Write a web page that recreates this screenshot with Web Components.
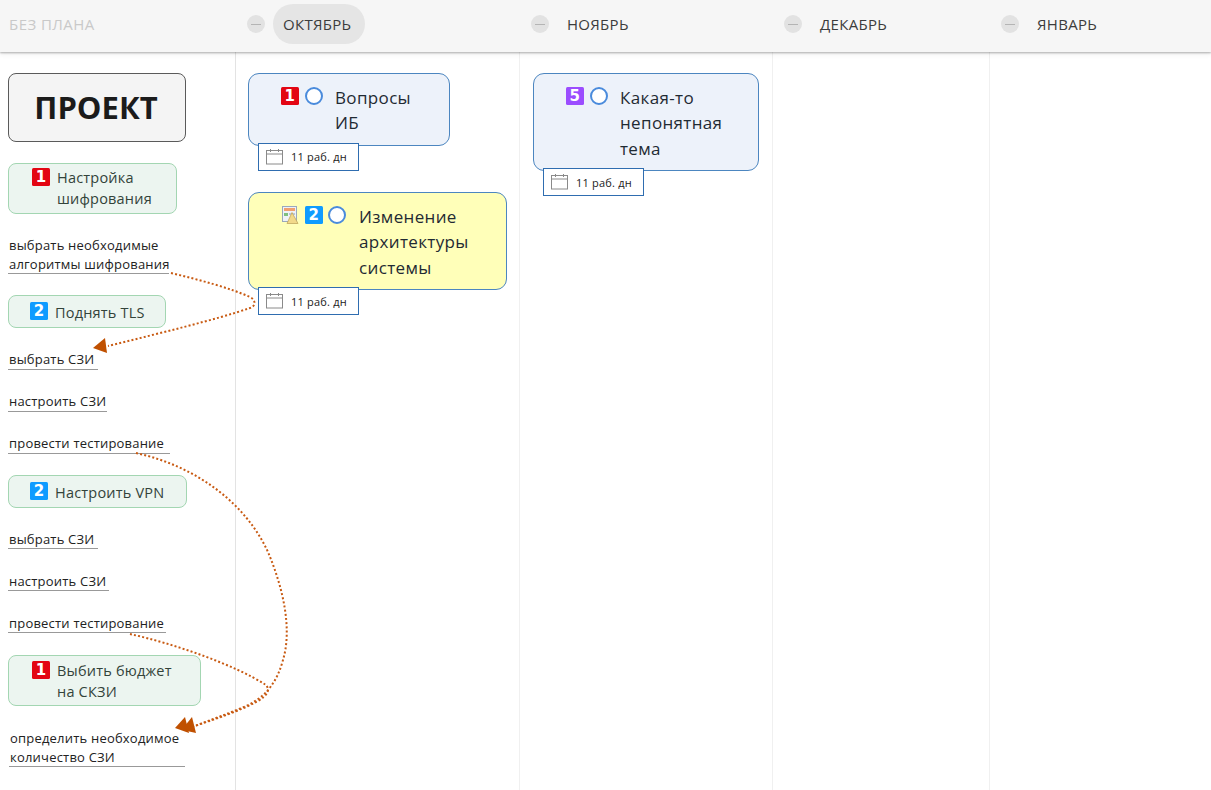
<!DOCTYPE html>
<html lang="ru"><head><meta charset="utf-8"><title>План</title>
<style>
html,body{margin:0;padding:0;height:100%;background:#fff;overflow:hidden}
body{font-family:"Open Sans","Noto Sans",sans-serif}
</style></head><body>
<x-board>
  <x-month slot="head" style="width:236px" muted label="БЕЗ ПЛАНА" nominus></x-month>
  <x-month slot="head" style="width:284px" active label="ОКТЯБРЬ"></x-month>
  <x-month slot="head" style="width:253px" label="НОЯБРЬ"></x-month>
  <x-month slot="head" style="width:217px" label="ДЕКАБРЬ"></x-month>
  <x-month slot="head" style="width:221px" label="ЯНВАРЬ"></x-month>

  <x-column style="width:236px;padding:21px 0 0 8px" strong>
    <x-project>ПРОЕКТ</x-project>
    <x-task style="width:169px;margin-top:21px;--pl:23px;--pt:4px;height:51px" n="1" c="r">Настройка<br>шифрования</x-task>
    <x-note style="width:161px;margin-top:22px">выбрать необходимые<br>алгоритмы шифрования</x-note>
    <x-task style="width:158px;margin-top:21px;--pl:21px;--pt:6px;--tp:1px;height:33px" n="2" c="b">Поднять TLS</x-task>
    <x-note style="width:90px;margin-top:22px">выбрать СЗИ</x-note>
    <x-note style="width:99px;margin-top:22.500px">настроить СЗИ</x-note>
    <x-note style="width:162px;margin-top:22.500px">провести тестирование</x-note>
    <x-task style="width:179px;margin-top:21px;--pl:21px;--pt:6px;--tp:1px;height:33px" n="2" c="b">Настроить VPN</x-task>
    <x-note style="width:90px;margin-top:22px">выбрать СЗИ</x-note>
    <x-note style="width:101px;margin-top:22.500px">настроить СЗИ</x-note>
    <x-note style="width:158px;margin-top:22.500px">провести тестирование</x-note>
    <x-task style="width:193px;margin-top:22px;--pl:23px;--pt:5px;--tp:0;height:51px" n="1" c="r">Выбить бюджет<br>на СКЗИ</x-task>
    <x-note style="width:176px;margin:23px 0 0 1px">определить необходимое<br>количество СЗИ</x-note>
  </x-column>

  <x-column style="width:284px;padding:21px 0 0 12px">
    <x-topic style="width:202px;--pl:32px;--tw:100px;--g:6px;--mr:12px" n="1" c="r">Вопросы ИБ</x-topic>
    <x-topic style="width:259px;margin-top:21px;--pl:33px;--tw:130px;--bg:#ffffb9;--g:5px;--mr:13px" n="2" c="b" sheet>Изменение архитектуры системы</x-topic>
  </x-column>

  <x-column style="width:253px;padding:21px 0 0 13px">
    <x-topic style="width:226px;--pl:32px;--tw:120px;--g:6px;--mr:12px" n="5" c="p">Какая-то непонятная тема</x-topic>
  </x-column>
  <x-column style="width:217px"></x-column>
  <x-column style="width:221px" last></x-column>
  <x-links slot="over"></x-links>
</x-board>

<script>
function def(name, css, html){
  customElements.define(name, class extends HTMLElement{
    constructor(){super();this.attachShadow({mode:'open'});}
    connectedCallback(){
      this.shadowRoot.innerHTML='<style>'+css+'</style>'+(typeof html==='function'?html(this):html);
    }
  });
}
const ff='"Open Sans","Noto Sans",sans-serif';

def('x-board',`
  :host{display:block;position:relative;width:1211px;height:790px;overflow:hidden;font-family:${ff}}
  .head{display:flex;height:52px;background:#f6f6f6;box-shadow:0 1px 2px rgba(0,0,0,.3),0 3px 5px rgba(0,0,0,.05);position:relative;z-index:2}
  .body{display:flex;height:738px}
`,`<div class="head"><slot name="head"></slot></div><div class="body"><slot></slot></div><slot name="over"></slot>`);

def('x-badge',`
  :host{display:block;flex:none}
  div{width:18px;height:18px;border-radius:1.500px;color:#fff;font:700 15px/18px "DejaVu Sans",sans-serif;text-align:center}
  .r{background:#e30613}.b{background:#0f9bff}.p{background:#9b4dff}
`,e=>`<div class="${e.getAttribute('c')}">${e.getAttribute('n')}</div>`);

def('x-month',`
  :host{display:flex;align-items:center;box-sizing:border-box;padding-left:11px;height:48px;flex:none}
  .m{width:18px;height:18px;border-radius:50%;background:#e2e2e2;position:relative;flex:none;margin-right:8px}
  .m i{position:absolute;left:4px;right:4px;top:8.500px;height:1px;background:#b4b4b4}
  .t{font:15px/40px ${ff};letter-spacing:.3px;color:#3c3c3c;padding:0 14px 0 10px;border-radius:20px;white-space:nowrap;height:40px}
  :host([active]) .t{background:#e5e5e5}
  :host([muted]) .t{color:#c9c9c9;padding-left:0;letter-spacing:.45px}
  :host([muted]){padding-left:9px}
`,e=>(e.hasAttribute('nominus')?'':'<div class="m"><i></i></div>')+`<div class="t">${e.getAttribute('label')}</div>`);

def('x-column',`
  :host{display:flex;flex-direction:column;align-items:flex-start;box-sizing:border-box;height:738px;flex:none;border-right:1px solid #f0f0f0}
  :host([strong]){border-right-color:#e3e3e3}
  :host([last]){border-right:0}
`,`<slot></slot>`);

def('x-project',`
  :host{display:flex;align-items:center;justify-content:center;box-sizing:border-box;width:178px;height:69px;padding:0 2px 0 0;background:#f4f4f4;border:1.300px solid #5a5a5a;border-radius:8px;font:700 31px/1 ${ff};color:#1b1b1b}
`,`<slot></slot>`);

def('x-task',`
  :host{display:flex;align-items:flex-start;gap:7px;box-sizing:border-box;padding:var(--pt,5px) 8px 0 var(--pl,22px);background:#ecf5f0;border:1px solid #a3d6b2;border-radius:8px;font:14.500px/20.500px ${ff};letter-spacing:.2px;color:#33433a}
  .t{flex:1;min-width:0;white-space:nowrap;padding-top:var(--tp,0)}
`,e=>`<x-badge n="${e.getAttribute('n')}" c="${e.getAttribute('c')}"></x-badge><div class="t"><slot></slot></div>`);

def('x-note',`
  :host{display:block;box-sizing:border-box;padding:0 0 0 1px;border-bottom:1px solid #999;font:13px/18.500px ${ff};letter-spacing:.2px;color:#222;white-space:nowrap}
`,`<slot></slot>`);

def('x-duration',`
  :host{display:flex;align-items:center;gap:8px;box-sizing:border-box;width:101px;height:28px;padding-left:7px;background:#fff;border:1px solid #2f6db0;font:11px/1 ${ff};letter-spacing:.2px;color:#222;position:relative;z-index:1}
  svg{display:block;flex:none}
`,`<svg width="17" height="16" viewBox="0 0 17 16" fill="none" stroke="#8a8a8a" stroke-width="1"><rect x=".5" y="1.500" width="16" height="13.500"/><path d="M.5 5h16M4.500 0v3M12.500 0v3"/></svg><span>11 раб. дн</span>`);

def('x-ring',`
  :host{display:block;width:18px;height:18px;box-sizing:border-box;border:2.800px solid #4a8bdc;border-radius:50%;background:#fff;flex:none}
`,``);

def('x-sheet',`
  :host{display:block;width:18px;height:18px;flex:none}
  svg{display:block}
`,`<svg width="18" height="18" viewBox="0 0 18 18"><rect x=".5" y=".5" width="14" height="15" fill="#eef2f8" stroke="#9aa8bd"/><rect x="2" y="2" width="11" height="3" fill="#f0a070"/><rect x="2" y="7" width="4" height="3" fill="#7fbf7f"/><rect x="7" y="7" width="6" height="2" fill="#b9c6dc"/><path d="M10 6.500 16 17.500H5Z" fill="#f2d98a" stroke="#c2a860" stroke-width=".8"/></svg>`);

def('x-topic',`
  :host{display:block;flex:none}
  .c{box-sizing:border-box;display:flex;align-items:flex-start;padding:11px 8px 9.400px var(--pl,33px);background:var(--bg,#edf2fa);border:1px solid #4c86c0;border-radius:11px;font:17px/25.300px ${ff};letter-spacing:.35px;color:#1f2a33}
  .i{display:flex;gap:var(--g,6px);margin-right:var(--mr,12px);padding-top:2px}
  .t{width:var(--tw,110px)}
  x-duration{margin:-3px 0 0 10px}
`,e=>`<div class="c"><div class="i">${e.hasAttribute('sheet')?'<x-sheet></x-sheet>':''}<x-badge n="${e.getAttribute('n')}" c="${e.getAttribute('c')}"></x-badge><x-ring></x-ring></div><div class="t"><slot></slot></div></div><x-duration></x-duration>`);

def('x-links',`
  :host{display:block;position:absolute;inset:0;pointer-events:none;z-index:3}
  svg{display:block}
  path.l{fill:none;stroke:#c85a12;stroke-width:2;stroke-dasharray:2 2.200}
  path.h{fill:#c05000}
`,`<svg width="1211" height="790" viewBox="0 0 1211 790">
  <path class="l" d="M171 273C200 280 230 288 250 297C256 300 256 306 250 308C215 320 160 333 108 346"/>
  <path class="h" d="M93 348 105 338 107 353Z"/>
  <path class="l" d="M136 453C195 466 245 502 268 552C284 590 292 630 283 660C277 682 266 697 246 706C228 714 210 720 195 726"/>
  <path class="l" d="M130 634C175 644 235 665 266 685C270 690 268 695 258 701C240 711 215 719 192 727"/>
  <path class="h" d="M175 728 185 717 189 733Z"/>
  <path class="h" d="M184 727 192 717 196 733 187 731Z"/>
</svg>`);
</script>
</body></html>
